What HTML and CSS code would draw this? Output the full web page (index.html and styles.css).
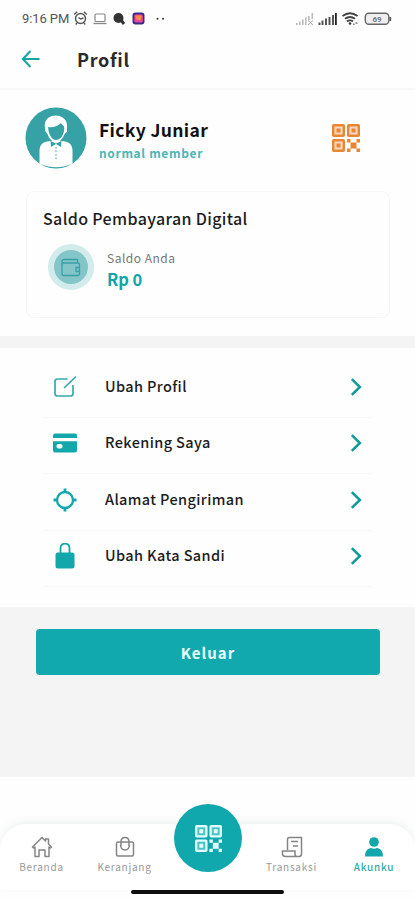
FILE: index.html
```html
<!DOCTYPE html>
<html lang="id">
<head>
<meta charset="utf-8">
<meta name="viewport" content="width=device-width, initial-scale=1">
<title>Profil</title>
<link rel="stylesheet" href="styles.css">
</head>
<body>
<svg width="0" height="0" class="defs">
  <symbol id="qr" viewBox="0 0 28 28">
    <g fill="none" stroke="currentColor" stroke-width="2.4">
      <rect x="1.2" y="1.2" width="10.6" height="10.6" rx=".6"/><rect x="16.2" y="1.2" width="10.6" height="10.6" rx=".6"/><rect x="1.2" y="16.2" width="10.6" height="10.6" rx=".6"/>
    </g>
    <g fill="currentColor">
      <path opacity=".3" d="M2 2h9v9H2zM17 2h9v9h-9zM2 17h9v9H2z"/>
      <path d="M4.500 4.500h4v4h-4zM19.500 4.500h4v4h-4zM4.500 19.500h4v4h-4z"/>
      <path d="M15 15h3.5v3.5H15zM24.500 15H28v3.5h-3.5zM18.500 18.500h6v6h-6zM15 24.500h3.5V28H15zM24.500 24.500H28V28h-3.5z"/>
    </g>
  </symbol>
  <symbol id="chevron" viewBox="0 0 12 18"><path d="M1.8 1.2 9.900 9l-8.100 7.800" fill="none" stroke="currentColor" stroke-width="2.5"/></symbol>
</svg>
<div class="screen">
  <div class="status">
    <span class="time">9:16 PM</span>
    <svg class="s-left" width="96" height="16" viewBox="72 10 96 16">
      <g fill="none" stroke="#555" stroke-width="1.4"><circle cx="80.500" cy="18.5" r="5"/><path d="M78.500 17.500l2 1.500 3-1M74.200 14.5l3-2.8M86.800 14.5l-3-2.8M77 23l-1.300 1.500M84 23l1.300 1.500"/></g>
      <rect x="95" y="14" width="10" height="7.500" rx="1" fill="none" stroke="#888" stroke-width="1.200"/><path d="M93.500 23.500h13" stroke="#888" stroke-width="1.300"/>
      <circle cx="118.500" cy="18" r="5" fill="#333"/><path d="m121 20 3 4" stroke="#333" stroke-width="3"/>
      <rect x="132.500" y="12.500" width="12" height="12" rx="3" fill="#3a2a86"/><rect x="134.300" y="14.500" width="8.500" height="8" rx="1.500" fill="#e8489a"/><path d="M135 15.500h7l-1.500 4.500h-3.500z" fill="#ff8a3e"/>
      <circle cx="157.500" cy="18.800" r="1" fill="#333"/><circle cx="163" cy="18.800" r="1" fill="#333"/>
    </svg>
    <svg class="s-right" width="98" height="16" viewBox="294 10 98 16">
      <g fill="#bbb"><path d="M296 23h1.600v2H296zM299 21.500h1.600V25H299zM302 19.500h1.600V25H302zM305 17.500h1.600V25H305zM308 16h1.600v4H308zM311.500 13h1.600v6h-1.600z"/></g><path d="m308 20.500 5 4.500m0-4.500-5 4.500" stroke="#aaa"/>
      <g fill="#555"><path d="M318.500 22.500h2V25h-2zM321.500 20.500h2V25h-2zM325 18.500h2V25h-2zM328.500 17h2v8h-2zM332 15h2v10h-2z"/><path fill="#222" d="M335 13h1.800v12H335z"/></g>
      <g fill="none" stroke="#444" stroke-width="1.900"><path d="M342.500 16q7.500-5.500 15 0M345 18.800q5-3.600 10 0M347 21.400q3-2 6 0"/></g><circle cx="350" cy="23.500" r="1.300" fill="#333"/><path d="M353 24.200h1.500m1-1.200h2" stroke="#777" stroke-width="1.500"/>
      <rect x="365.300" y="13.200" width="23.500" height="11" rx="3.500" fill="#eee" stroke="#666" stroke-width="1.400"/><path d="M390.300 17v4" stroke="#555" stroke-width="1.700"/><text x="377" y="21.700" text-anchor="middle" class="battery">69</text>
    </svg>
  </div>
  <header class="header">
    <svg width="20" height="18" viewBox="0 0 20 18" fill="none" stroke="#12a5a8" stroke-width="2"><path d="M18.500 9H2M9.500 1 1.800 9l7.700 8"/></svg>
    <h1>Profil</h1>
  </header>
  <section class="account">
    <div class="user">
      <svg class="avatar" width="62" height="62" viewBox="0 0 62 62">
        <circle cx="31" cy="31" r="30.500" fill="#36a2a5"/>
        <path fill="#fff" d="M14.500 56.500V44c0-7 3.500-9.500 12-10h9c8.500.5 12 3 12 10v12.500C38 61.500 24 61.500 14.500 56.500z"/>
        <path fill="#fff" d="M20 21c-3-16.500 23.500-16.500 22-1v4.500L39.500 27c-2 5.500-5.500 8.500-8.500 8.500s-6.500-3-8.500-8.500L20 24z"/>
        <path fill="#36a2a5" d="M23 20c5 1 10-1 13-4 2 3 4 2 3 8-1 6-5 9-8 9s-7-3-8-13z"/>
        <path fill="#36a2a5" d="m25.500 34 5.500 2.500 5.500-2.500-.5 6-5-3-5 3z"/>
        <path d="M31 40v14" stroke="#36a2a5" stroke-dasharray="1.500 2"/>
      </svg>
      <div class="identity"><div class="name">Ficky Juniar</div><div class="level">normal member</div></div>
      <svg class="user-qr" width="28" height="28"><use href="#qr"/></svg>
    </div>
    <div class="card">
      <h2>Saldo Pembayaran Digital</h2>
      <div class="balance">
        <span class="wallet"><svg width="20" height="19" viewBox="0 0 20 19" fill="none" stroke="#38a0a5" stroke-width="1.300"><rect x="1" y="5" width="17.500" height="12.500" rx="1.500"/><path d="M1 6.500V3.500q0-2 2-2h13.500V5M18.500 9.500h-3.500v4h3.500"/></svg></span>
        <div><div class="label">Saldo Anda</div><div class="amount">Rp 0</div></div>
      </div>
    </div>
  </section>
  <nav class="menu">
    <a class="row"><svg class="icon" width="26" height="26" viewBox="0 0 26 26" fill="none" stroke="#35aaac" stroke-width="1.700"><path d="M15.500 5H5.500Q3 5 3 7.500v12Q3 22 5.500 22h13q2.500 0 2.500-2.500V11"/><path d="m12 14 12-11.500"/></svg><span>Ubah Profil</span><svg class="chev" width="12" height="18"><use href="#chevron"/></svg></a>
    <a class="row"><svg class="icon" width="26" height="26" viewBox="0 0 26 26" fill="#12a7aa"><path d="M1 8V5.500Q1 3.500 3 3.500h20q2 0 2 2V8zM1 11.200h24v9.300q0 2-2 2H3q-2 0-2-2z"/><rect x="4.500" y="14" width="6" height="4.500" rx="2" fill="#fff"/></svg><span>Rekening Saya</span><svg class="chev" width="12" height="18"><use href="#chevron"/></svg></a>
    <a class="row"><svg class="icon" width="26" height="26" viewBox="0 0 26 26" fill="none" stroke="#12a7aa"><circle cx="13" cy="13" r="8" stroke-width="2.300"/><path d="M13 1.500V5M13 21v3.500M1.500 13H5M21 13h3.500" stroke-width="2.800"/></svg><span>Alamat Pengiriman</span><svg class="chev" width="12" height="18"><use href="#chevron"/></svg></a>
    <a class="row"><svg class="icon" width="26" height="26" viewBox="0 0 26 26"><path d="M8.500 11V5.500q0-4.800 4.500-4.800t4.500 4.800V11" fill="none" stroke="#12a7aa" stroke-width="1.800"/><rect x="3.500" y="9.500" width="19" height="16" rx="2.500" fill="#12a7aa"/></svg><span>Ubah Kata Sandi</span><svg class="chev" width="12" height="18"><use href="#chevron"/></svg></a>
  </nav>
  <div class="logout"><button>Keluar</button></div>
  <footer class="bottom">
    <nav class="tabs">
      <a class="tab"><svg width="22" height="22" viewBox="0 0 22 22" fill="none" stroke="#858585" stroke-width="1.500" stroke-linejoin="round"><path d="m1.500 11 9.500-9.500 3.500 3.500V3h3v5l3 3-1 1-1.500-1v9.500h-4V14H8v6.500H4V11l-1.500 1z"/></svg><span>Beranda</span></a>
      <a class="tab"><svg width="22" height="22" viewBox="0 0 22 22" fill="none" stroke="#858585" stroke-width="1.500"><rect x="2.500" y="6" width="17" height="14" rx="1.500"/><path d="M7 10V6q0-4.500 4-4.500T15 6v4M6.500 9q.5 5 4.500 5t4.500-5"/></svg><span>Keranjang</span></a>
      <a class="scan"><svg width="27" height="27"><use href="#qr"/></svg></a>
      <a class="tab"><svg width="22" height="22" viewBox="0 0 22 22" fill="none" stroke="#858585" stroke-width="1.500"><path d="M6.500 14V3.500q0-2 2-2h12V18q0 2.500-2.500 2.500H5q-3.500 0-3.500-2.500v-3H14v3q0 2.500 2 2.500M10 5.500h7M12 10h5"/></svg><span>Transaksi</span></a>
      <a class="tab active"><svg width="22" height="22" viewBox="0 0 22 22" fill="#12a7aa"><circle cx="11" cy="6" r="4.800"/><path d="M2 20.500C2 14.500 5 12.500 8 12q3 1.300 6 0c3 .5 6 2.500 6 8.500z"/></svg><span>Akunku</span></a>
    </nav>
    <div class="home-bar"></div>
  </footer>
</div>
</body>
</html>
```
FILE: styles.css
```css
* { box-sizing: border-box; }
body { margin: 0; font-family: "Noto Sans CJK JP", "Noto Sans", sans-serif; color: #1c1c1c; background: #fff; }
.defs { display: block; }
.screen { width: 415px; height: 900px; display: flex; flex-direction: column; overflow: hidden; background: #fefefe; }
h1, h2 { margin: 0; }
.status { height: 36px; flex: none; display: flex; align-items: flex-start; padding: 10px 23px 0 22px; }
.time { font: 13px/17px Roboto, sans-serif; width: 50px; color: #555; white-space: nowrap; letter-spacing: -.1px; }
.s-right { margin-left: auto; }
.battery { font: bold 8px Roboto, sans-serif; fill: #777; }
.header { height: 54px; flex: none; display: flex; align-items: center; padding: 0 21px 6px; border-bottom: 2px solid #f8f8f8; }
.header h1 { margin-left: 36px; font-size: 18px; line-height: 24px; font-weight: 700; letter-spacing: .7px; color: #2a2a2a; }
.account { height: 246px; flex: none; padding: 17px 25px 0; }
.user { display: flex; align-items: center; height: 62px; }
.identity { margin-left: 12px; padding-top: 6px; }
.name { font-size: 17.500px; line-height: 24px; font-weight: 700; color: #111; white-space: nowrap; letter-spacing: .35px; }
.level { font-size: 12px; line-height: 22px; font-weight: 700; color: #4cb5b7; white-space: nowrap; letter-spacing: .65px; }
.user-qr { margin: 0 30px 0 auto; color: #e98634; }
.card { margin: 22px 0 0 1px; width: 364px; height: 127px; border: 1px solid #f6f6f6; border-radius: 8px; padding: 14px 16px; }
.card h2 { font-size: 16px; line-height: 25px; font-weight: 500; white-space: nowrap; letter-spacing: .35px; }
.balance { display: flex; margin-top: 13px; }
.wallet { width: 46px; height: 46px; margin-left: 5px; border-radius: 50%; border: 6px solid #d2ecec; background: #84c5c9; display: flex; align-items: center; justify-content: center; }
.balance div div { margin-left: 13px; white-space: nowrap; }
.label { padding-top: 2px; font-size: 12px; line-height: 23px; color: #777; letter-spacing: .5px; }
.amount { font-size: 16.500px; line-height: 20px; font-weight: 700; color: #12a5a8; }
.menu { height: 271px; flex: none; border-top: 12px solid #f4f4f4; padding: 13px 43px 0; }
.row { display: flex; align-items: center; height: 56.500px; padding: 0 10px 4px 9px; border-bottom: 1px solid #f8f8f8; }
.row span { margin: -2px 0 0 27px; font-size: 14.500px; line-height: 24px; font-weight: 500; white-space: nowrap; letter-spacing: .38px; }
.chev { margin-left: auto; color: #12999c; }
.logout { height: 170px; flex: none; padding: 22px 35px 0 36px; background: #f4f4f4; }
.logout button { display: block; width: 344px; height: 46px; padding: 0; border: 0; border-radius: 4px; background: #11a8ae; color: #e7ffff; font: 700 15px/45px "Noto Sans CJK JP", sans-serif; letter-spacing: 1px; }
.bottom { flex: 1; padding-top: 47px; }
.tabs { height: 66px; display: grid; grid-template-columns: 83px 83px 84px 83px 82px; border-radius: 26px 26px 0 0; background: #fff; box-shadow: 0 -3px 8px rgba(0,60,60,.06); }
.tab { display: flex; flex-direction: column; align-items: center; padding-top: 12px; color: #999; }
.tab span { font-size: 10px; line-height: 15px; margin-top: 1px; white-space: nowrap; letter-spacing: .75px; }
.tab.active { color: #33aaac; }
.tab.active span { font-weight: 500; }
.scan { width: 68px; height: 68px; margin: -20px auto 0; border-radius: 50%; background: #11a8ad; color: #e2ffff; display: flex; align-items: center; justify-content: center; }
.home-bar { width: 153px; height: 4px; border-radius: 2px; background: #0d0d0d; margin: 0 auto; }
```
